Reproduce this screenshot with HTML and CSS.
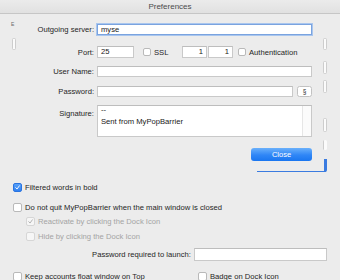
FILE: index.html
```html
<!DOCTYPE html>
<html>
<head>
<meta charset="utf-8">
<link rel="stylesheet" href="styles.css">
</head>
<body>
<div class="titlebar">Preferences</div>

<div class="form">
  <div class="row r-server">
    <span class="lbl">Outgoing server:</span>
    <div class="field focus w-server">myse</div>
  </div>
  <div class="row r-port">
    <span class="lbl">Port:</span>
    <div class="field w-port">25</div>
    <span class="cb port-cb"></span><span class="ssl">SSL</span>
    <div class="field num">1</div>
    <div class="field num num2">1</div>
    <span class="cb auth-cb"></span><span>Authentication</span>
  </div>
  <div class="row r-user">
    <span class="lbl">User Name:</span>
    <div class="field w-user"></div>
  </div>
  <div class="row r-pass">
    <span class="lbl">Password:</span>
    <div class="field w-pass"></div>
    <div class="sect">§</div>
  </div>
  <div class="row r-sig">
    <span class="lbl lbl-top">Signature:</span>
    <div class="field textarea">
      <div class="ta-text">--<br>Sent from MyPopBarrier</div>
      <div class="ta-scroll"></div>
    </div>
  </div>
  <div class="row r-close">
    <div class="btn">Close</div>
  </div>
</div>

<div class="options">
  <div class="opt o-filtered">
    <span class="cb checked"><svg viewBox="0 0 9 9"><path d="M2.2 4.7 L3.9 6.5 L6.9 2.3" fill="none" stroke="#fff" stroke-width="1.2" stroke-linecap="round" stroke-linejoin="round"/></svg></span>
    <span>Filtered words in bold</span>
  </div>
  <div class="opt o-quit">
    <span class="cb"></span>
    <span>Do not quit MyPopBarrier when the main window is closed</span>
  </div>
  <div class="opt sub o-react">
    <span class="cb disabled"><svg viewBox="0 0 9 9"><path d="M2.2 4.7 L3.9 6.5 L6.9 2.3" fill="none" stroke="#a9a9a9" stroke-width="1.1" stroke-linecap="round" stroke-linejoin="round"/></svg></span>
    <span class="dim">Reactivate by clicking the Dock Icon</span>
  </div>
  <div class="opt sub o-hide">
    <span class="cb disabled"></span>
    <span class="dim">Hide by clicking the Dock Icon</span>
  </div>
  <div class="launch">
    <span>Password required to launch:</span>
    <div class="field w-launch"></div>
  </div>
  <div class="last">
    <div class="opt">
      <span class="cb"></span>
      <span>Keep accounts float window on Top</span>
    </div>
    <div class="opt">
      <span class="cb"></span>
      <span>Badge on Dock Icon</span>
    </div>
  </div>
</div>

<span class="ghost-e">E</span>
<span class="ghost-rect gl"></span>
<span class="ghost-rect g1"></span>
<span class="ghost-rect g2"></span>
<span class="ghost-rect g3"></span>
<span class="ghost-rect g4"></span>
<span class="ghost-rect g5"></span>
<span class="focus-edge"></span>
</body>
</html>
```

FILE: styles.css
```css
* { box-sizing: border-box; }
html, body { margin: 0; padding: 0; }
body {
  width: 340px;
  height: 280px;
  overflow: hidden;
  position: relative;
  background: #ececec;
  font-family: "Liberation Sans", Arial, sans-serif;
  font-size: 7.65px;
  color: #262626;
}
.titlebar {
  height: 14px;
  background: linear-gradient(#ebebeb, #e1e1e1);
  border-bottom: 1px solid #c6c6c6;
  text-align: center;
  font-size: 8px;
  line-height: 13px;
  color: #4b4b4b;
}
.form { display: flex; flex-direction: column; }
.row { display: flex; align-items: center; }
.lbl { width: 94px; margin-right: 3px; text-align: right; flex: none; }
.lbl-top { align-self: flex-start; padding-top: 4px; }
.field {
  background: #fff;
  border: 1px solid #c9c9c9;
  border-top-color: #bdbdbd;
  height: 12px;
  line-height: 10px;
  padding-left: 3px;
  color: #1a1a1a;
  flex: none;
}
.focus {
  border-color: #7aa3df;
  box-shadow: 0 0 0 1px #a9c6ee;
}
.r-server { margin-top: 10px; height: 11px; }
.w-server { width: 215px; height: 11px; line-height: 9px; }
.r-port { margin-top: 11px; height: 12px; }
.w-port { width: 37px; margin-right: 9px; }
.cb {
  width: 8px;
  height: 8px;
  border: 1px solid #b9b9b9;
  border-radius: 2px;
  background: #fff;
  flex: none;
  display: inline-flex;
}
.cb svg { width: 100%; height: 100%; display: block; }
.port-cb { margin-right: 3px; }
.ssl { width: 28px; }
.num { width: 25px; text-align: right; padding-right: 3px; padding-left: 0; }
.num2 { margin-left: 1px; margin-right: 5px; }
.auth-cb { margin-right: 3px; }
.r-user { margin-top: 8px; height: 11px; }
.w-user { width: 215px; height: 11px; }
.r-pass { margin-top: 9px; height: 11px; }
.w-pass { width: 196px; height: 11px; }
.sect {
  width: 15px;
  height: 11px;
  margin-left: 4px;
  background: #fff;
  border: 1px solid #c2c2c2;
  border-radius: 2.5px;
  font-size: 6.5px;
  line-height: 9px;
  text-align: center;
  color: #333;
}
.r-sig { margin-top: 8px; height: 32px; align-items: stretch; }
.textarea {
  width: 215px;
  height: 32px;
  display: flex;
  line-height: 12px;
  padding: 0;
}
.ta-text { flex: 1; padding: 0 0 0 3px; line-height: 12px; margin-top: -2px; }
.ta-scroll { width: 9px; border-left: 1px solid #e6e6e6; background: #fbfbfb; }
.r-close { margin-top: 11px; height: 13px; justify-content: flex-end; padding-right: 28px; }
.btn {
  width: 61px;
  height: 13px;
  border-radius: 3px;
  background: linear-gradient(#6ab0fb, #2f86f6 55%, #1a76f0);
  color: #fff;
  text-align: center;
  line-height: 13px;
  font-size: 7.5px;
}
.options { display: flex; flex-direction: column; padding-left: 13px; }
.opt { display: flex; align-items: center; height: 10px; gap: 3px; }
.opt .cb { width: 9px; height: 9px; }
.o-filtered { margin-top: 21px; }
.cb.checked { background: linear-gradient(#5aa2f8, #2f80f1); border-color: #2a74e0; }
.cb.disabled { background: #f6f6f6; border-color: #d6d6d6; }
.o-quit { margin-top: 10px; }
.sub { padding-left: 13px; }
.o-react { margin-top: 4px; }
.o-hide { margin-top: 5px; }
.dim { color: #a4a4a4; }
.launch {
  margin-top: 7px;
  height: 13px;
  display: flex;
  align-items: center;
  justify-content: flex-end;
  padding-right: 13px;
  gap: 3px;
}
.w-launch { width: 133px; height: 13px; }
.last { display: grid; grid-template-columns: 185px 1fr; margin-top: 10px; }
.ghost-e {
  position: absolute;
  left: 11px;
  top: 21px;
  font-size: 5px;
  color: #6a6a6a;
}
.ghost-rect {
  position: absolute;
  width: 4px;
  background: #fbfbfb;
  border: 1px solid #cdcdcd;
  border-radius: 1.5px;
}
.gl { left: 12px; top: 38px; height: 12px; }
.g1 { left: 323px; top: 38px; height: 12px; }
.g2 { left: 323px; top: 61px; height: 13px; }
.g3 { left: 323px; top: 80px; height: 13px; }
.g4 { left: 323px; top: 118px; height: 14px; }
.g5 { left: 323px; top: 140px; height: 10px; border-right: none; border-top: none; border-bottom: none; }
.focus-edge {
  position: absolute;
  left: 257px;
  top: 159px;
  width: 70px;
  height: 13px;
  border-right: 3px solid #3a7be0;
  border-bottom: 1px solid #3a7be0;
  border-bottom-right-radius: 2px;
}
```
